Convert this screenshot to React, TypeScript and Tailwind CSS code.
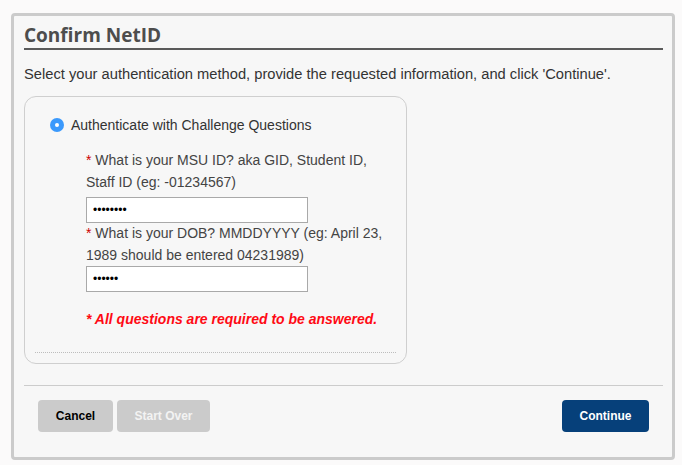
import React, { useState } from "react";

export default function App() {
  const [msuId, setMsuId] = useState("12345678");
  const [dob, setDob] = useState("123456");

  return (
    <div className="w-[682px] h-[465px] bg-[#fbfafa] pt-[13px] pl-[11px] font-['Liberation_Sans',Arial,sans-serif]">
      <div className="w-[664px] h-[447px] bg-[#f7f7f7] border-[3px] border-[#cbcbcb] rounded-[4px] pl-[10px] pr-[9px] flex flex-col">
        <h1 className="mt-[8px] text-[19px] leading-[23px] font-bold text-[#4d4d4d] font-['Open_Sans',sans-serif] border-b-2 border-[#5a5a5a] pb-[1px]">
          Confirm NetID
        </h1>

        <p className="mt-[15px] text-[14.7px] leading-[18px] text-[#333]">
          Select your authentication method, provide the requested information,
          and click 'Continue'.
        </p>

        <div className="mt-[13px] w-[383px] h-[268px] border border-[#cfcfcf] rounded-[12px] pt-[19px] px-[10px] flex flex-col">
          <label className="flex items-center gap-[7px] pl-[15px] text-[14px] leading-[18px] text-[#333]">
            <span className="w-[14px] h-[14px] rounded-full bg-[#3b99fc] flex items-center justify-center">
              <span className="w-[4px] h-[4px] rounded-full bg-white" />
            </span>
            Authenticate with Challenge Questions
          </label>

          <div className="pl-[51px] mt-[15px] text-[14px] leading-[22px] text-[#444]">
            <p className="w-[290px]">
              <span className="text-[#c00]">*</span> What is your MSU ID? aka
              GID, Student ID, Staff ID (eg: -01234567)
            </p>
            <input
              type="password"
              value={msuId}
              onChange={(e) => setMsuId(e.target.value)}
              className="block mt-[4px] w-[222px] h-[26px] bg-white border border-[#a9a9a9] px-[6px] text-[12px] text-black outline-none"
            />
            <p className="w-[300px] -mt-[1px]">
              <span className="text-[#c00]">*</span> What is your DOB? MMDDYYYY
              (eg: April 23, 1989 should be entered 04231989)
            </p>
            <input
              type="password"
              value={dob}
              onChange={(e) => setDob(e.target.value)}
              className="block w-[222px] h-[26px] bg-white border border-[#a9a9a9] px-[6px] text-[12px] text-black outline-none"
            />
            <p className="mt-[16px] text-[14px] font-bold italic text-[#ff0a14]">
              * All questions are required to be answered.
            </p>
          </div>

          <div className="mt-auto mb-[10px] border-b border-dotted border-[#bdbdbd]" />
        </div>

        <div className="mt-[21px] border-t border-[#cccccc]" />

        <div className="mt-[14px] px-[14px] flex items-center text-[12px] font-bold">
          <button className="w-[75px] h-[32px] bg-[#cbcbcb] text-black rounded-[4px]">
            Cancel
          </button>
          <button className="ml-[4px] w-[93px] h-[32px] bg-[#cbcbcb] text-[#f3f3f3] rounded-[4px]">
            Start Over
          </button>
          <button className="ml-auto w-[87px] h-[32px] bg-[#06407a] text-white rounded-[4px]">
            Continue
          </button>
        </div>
      </div>
    </div>
  );
}
